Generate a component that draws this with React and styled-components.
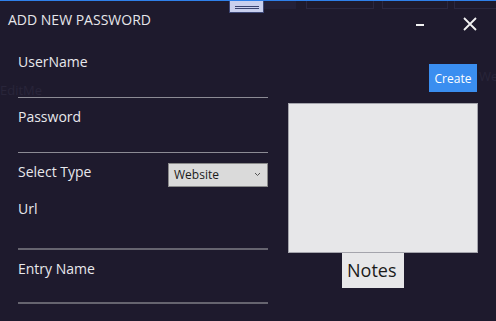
import styled, { createGlobalStyle } from "styled-components";

const GlobalStyle = createGlobalStyle`
  html, body {
    margin: 0;
    padding: 0;
    background: #1e1a2d;
  }
  body {
    font-family: "Open Sans", "Noto Sans", sans-serif;
  }
`;

const Field = ({ label, height, thick }) => (
  <FieldBox>
    <Label>{label}</Label>
    <Underline $height={height} $thick={thick} />
  </FieldBox>
);

const App = () => {
  return (
    <>
      <GlobalStyle />
      <Window>
        <Backdrop>
          <GhostTab $w={32} $dark />
          <GhostTab $w={68} $gap={10} />
          <GhostTab $w={66} $gap={8} />
          <GhostTab $w={50} $gap={6} />
        </Backdrop>
        <GhostText $x={0} $y={80}>EditMe</GhostText>
        <GhostText $x={479} $y={66}>We</GhostText>

        <Handle>
          <HandleLine />
          <HandleLine />
        </Handle>

        <Header>
          <Title>ADD NEW PASSWORD</Title>
          <Controls>
            <ControlButton aria-label="minimize">
              <svg width="10" height="14" viewBox="0 0 10 14">
                <rect x="1" y="7" width="8" height="2" fill="#f2f2f2" />
              </svg>
            </ControlButton>
            <ControlButton aria-label="close">
              <svg width="14" height="14" viewBox="0 0 14 14">
                <path d="M1 1 L13 13 M13 1 L1 13" stroke="#f2f2f2" strokeWidth="1.8" />
              </svg>
            </ControlButton>
          </Controls>
        </Header>

        <Body>
          <LeftColumn>
            <Field label="UserName" height={26} />
            <Field label="Password" height={26} />
            <SelectRow>
              <Label>Select Type</Label>
              <Select>
                <span>Website</span>
                <svg width="7" height="5" viewBox="0 0 7 5">
                  <path d="M1 1 L3.5 3.5 L6 1" fill="none" stroke="#555" strokeWidth="1" />
                </svg>
              </Select>
            </SelectRow>
            <Field label="Url" height={31} thick />
            <Field label="Entry Name" height={25} thick />
          </LeftColumn>

          <RightColumn>
            <CreateButton>Create</CreateButton>
            <NotesArea />
            <NotesLabel>Notes</NotesLabel>
          </RightColumn>
        </Body>
      </Window>
    </>
  );
};

export default App;

const Window = styled.div`
  position: relative;
  width: 496px;
  height: 321px;
  box-sizing: border-box;
  border-top: 1px solid #2f80ea;
  background: #1e1a2d;
  color: #e8e8ec;
  overflow: hidden;
`;

const Backdrop = styled.div`
  position: absolute;
  top: 0;
  left: 264px;
  display: flex;
`;

const GhostTab = styled.div`
  width: ${(p) => p.$w}px;
  height: 8px;
  margin-left: ${(p) => p.$gap || 0}px;
  box-sizing: border-box;
  background: ${(p) => (p.$dark ? "#232038" : "transparent")};
  border: ${(p) => (p.$dark ? "none" : "1px solid #2a2740")};
  border-top: none;
`;

const GhostText = styled.span`
  position: absolute;
  left: ${(p) => p.$x}px;
  top: ${(p) => p.$y}px;
  font-size: 13px;
  color: #29253a;
`;

const Handle = styled.div`
  position: absolute;
  top: -1px;
  left: 229px;
  width: 35px;
  height: 13px;
  box-sizing: border-box;
  background: #c9d0ee;
  border: 1px solid #3e4876;
  display: flex;
  flex-direction: column;
  align-items: center;
  justify-content: center;
  gap: 1px;
  padding-top: 1px;
`;

const HandleLine = styled.div`
  width: 24px;
  height: 1px;
  background: #3a4470;
`;

const Header = styled.div`
  display: flex;
  align-items: flex-start;
  justify-content: space-between;
  padding: 9px 0 0 8px;
  height: 41px;
  box-sizing: border-box;
`;

const Title = styled.div`
  font-size: 14px;
  line-height: 20px;
  color: #e6e6ea;
`;

const Controls = styled.div`
  display: flex;
  align-items: center;
  gap: 38px;
  padding: 7px 19px 0 0;
`;

const ControlButton = styled.div`
  display: flex;
  align-items: center;
  justify-content: center;
`;

const Body = styled.div`
  display: grid;
  grid-template-columns: 250px 190px;
  column-gap: 20px;
  padding-left: 18px;
`;

const LeftColumn = styled.div`
  display: flex;
  flex-direction: column;
  padding-top: 10px;
`;

const FieldBox = styled.div`
  display: flex;
  flex-direction: column;
  margin-bottom: 9px;
`;

const Label = styled.div`
  font-size: 14px;
  line-height: 20px;
  color: #e8e8ec;
`;

const Underline = styled.div`
  height: ${(p) => p.$height}px;
  box-sizing: border-box;
  border-bottom: ${(p) => (p.$thick ? "2px solid #66646f" : "1px solid #8c8b94")};
`;

const SelectRow = styled.div`
  display: flex;
  justify-content: space-between;
  align-items: flex-start;
  margin-bottom: 12px;
`;

const Select = styled.div`
  margin-top: 1px;
  width: 100px;
  height: 24px;
  box-sizing: border-box;
  background: #dadada;
  border: 1px solid #8a8a8a;
  display: flex;
  align-items: center;
  justify-content: space-between;
  padding: 0 6px 1px 5px;
  font-size: 12px;
  color: #1a1a1a;
`;

const RightColumn = styled.div`
  display: flex;
  flex-direction: column;
  padding-top: 22px;
`;

const CreateButton = styled.div`
  align-self: flex-end;
  width: 48px;
  height: 28px;
  margin-right: 1px;
  background: #3a8ef0;
  color: #ffffff;
  font-size: 12px;
  display: flex;
  align-items: center;
  justify-content: center;
`;

const NotesArea = styled.div`
  margin-top: 11px;
  height: 150px;
  box-sizing: border-box;
  background: #e7e7e9;
  border: 1px solid #a4a4ac;
`;

const NotesLabel = styled.div`
  align-self: flex-start;
  margin-left: 54px;
  width: 62px;
  height: 35px;
  box-sizing: border-box;
  padding-left: 5px;
  background: #e7e7e9;
  color: #1a1a1a;
  font-size: 18px;
  line-height: 35px;
`;
